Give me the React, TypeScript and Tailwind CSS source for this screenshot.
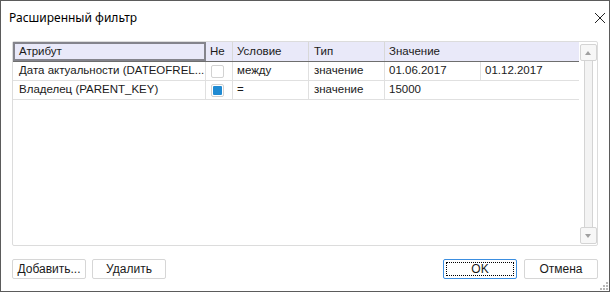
import React from "react";

const cellText = "text-[11.5px] leading-none text-[#1a1a1a] whitespace-nowrap overflow-hidden";

function Checkbox({ checked }: { checked?: boolean }) {
  return (
    <div className="w-[13px] h-[13px] rounded-[2px] border border-[#d2d2d2] bg-white flex items-center justify-center">
      {checked && <div className="w-[9px] h-[9px] bg-[#1f8ad2] rounded-[1px]" />}
    </div>
  );
}

function Btn({ children, ok }: { children: React.ReactNode; ok?: boolean }) {
  return (
    <div
      className={
        "w-[74px] h-[20px] rounded-[2px] bg-white flex items-center justify-center relative text-[12px] text-[#1a1a1a] " +
        (ok ? "border border-[#3b8ee0]" : "border border-[#d6d6d6]")
      }
      style={{ fontFamily: "'Liberation Sans', Arial, sans-serif" }}
    >
      {ok && <div className="absolute inset-[2px] border border-dotted border-black" />}
      <span className="relative">{children}</span>
    </div>
  );
}

function Arrow({ up }: { up?: boolean }) {
  return (
    <div className="w-[17px] h-[17px] rounded-[2px] border border-[#d4d4d4] bg-[#f7f7f7] flex items-center justify-center">
      <svg width="6" height="4" viewBox="0 0 6 4">
        {up ? <path d="M0 4 L3 0 L6 4 Z" fill="#a0a0a0" /> : <path d="M0 0 L3 4 L6 0 Z" fill="#a0a0a0" />}
      </svg>
    </div>
  );
}

export default function App() {
  return (
    <div
      className="w-[610px] h-[292px] bg-white border border-[#5b5b5b] flex flex-col relative"
      style={{ fontFamily: "'Liberation Sans', Arial, sans-serif" }}
    >
      {/* title */}
      <div className="h-[40px] flex items-start justify-between pl-[8px] pr-[3px] pt-[8px]">
        <span className="text-[12px] text-black" style={{ fontFamily: "'Noto Sans', 'Open Sans', sans-serif" }}>
          Расширенный фильтр
        </span>
        <svg width="12" height="12" viewBox="0 0 12 12" className="mt-[3px] mr-[0px]">
          <path d="M1 1 L11 11 M11 1 L1 11" stroke="#222" strokeWidth="1" />
        </svg>
      </div>

      {/* grid */}
      <div className="mx-[11px] h-[205px] border border-[#dcdcdc] rounded-[2px] flex">
        <div className="w-[566px] flex flex-col">
          {/* header */}
          <div className="h-[20px] flex bg-[#e9e9f9] border-b border-[#6e6e6e]">
            <div className={"w-[193px] border-2 border-[#84848c] flex items-center pl-[4px] " + cellText}>Атрибут</div>
            <div className={"w-[27px] border-r border-[#d8d8d8] flex items-center pl-[4px] " + cellText}>Не</div>
            <div className={"w-[76px] border-r border-[#d8d8d8] flex items-center pl-[4px] " + cellText}>Условие</div>
            <div className={"w-[76px] border-r border-[#d8d8d8] flex items-center pl-[5px] " + cellText}>Тип</div>
            <div className={"flex-1 flex items-center pl-[4px] " + cellText}>Значение</div>
          </div>
          {/* row 1 */}
          <div className="h-[19px] flex border-b border-[#e0e0e0]">
            <div className={"w-[193px] border-r border-[#e0e0e0] flex items-center pl-[6px] " + cellText}>Дата актуальности (DATEOFREL...</div>
            <div className="w-[27px] border-r border-[#e0e0e0] flex items-center pl-[5px]">
              <Checkbox />
            </div>
            <div className={"w-[76px] border-r border-[#e0e0e0] flex items-center pl-[4px] " + cellText}>между</div>
            <div className={"w-[76px] border-r border-[#e0e0e0] flex items-center pl-[5px] " + cellText}>значение</div>
            <div className={"w-[96px] border-r border-[#e0e0e0] flex items-center pl-[4px] " + cellText}>01.06.2017</div>
            <div className={"flex-1 flex items-center pl-[4px] " + cellText}>01.12.2017</div>
          </div>
          {/* row 2 */}
          <div className="h-[19px] flex border-b border-[#e0e0e0]">
            <div className={"w-[193px] border-r border-[#e0e0e0] flex items-center pl-[6px] " + cellText}>Владелец (PARENT_KEY)</div>
            <div className="w-[27px] border-r border-[#e0e0e0] flex items-center pl-[5px]">
              <Checkbox checked />
            </div>
            <div className={"w-[76px] border-r border-[#e0e0e0] flex items-center pl-[4px] " + cellText}>=</div>
            <div className={"w-[76px] border-r border-[#e0e0e0] flex items-center pl-[5px] " + cellText}>значение</div>
            <div className={"flex-1 flex items-center pl-[4px] " + cellText}>15000</div>
          </div>
        </div>
        {/* scrollbar */}
        <div className="flex-1 flex flex-col items-center pt-[2px] pb-[1px]">
          <Arrow up />
          <div className="flex-1 w-[9px] border-x border-[#d4d4d4] bg-[#f3f3f3]" />
          <Arrow />
        </div>
      </div>

      {/* buttons */}
      <div className="flex items-center justify-between px-[11px] mt-[13px]">
        <div className="flex gap-[6px]">
          <Btn>Добавить...</Btn>
          <Btn>Удалить</Btn>
        </div>
        <div className="flex gap-[7px]">
          <Btn ok>OK</Btn>
          <Btn>Отмена</Btn>
        </div>
      </div>

      {/* resize grip */}
      <svg width="9" height="9" viewBox="0 0 9 9" className="absolute right-[1px] bottom-[1px]">
        {[[7, 1], [7, 4], [4, 4], [7, 7], [4, 7], [1, 7]].map(([x, y], i) => (
          <rect key={i} x={x} y={y} width="2" height="2" fill="#b8b8b8" />
        ))}
      </svg>
    </div>
  );
}
